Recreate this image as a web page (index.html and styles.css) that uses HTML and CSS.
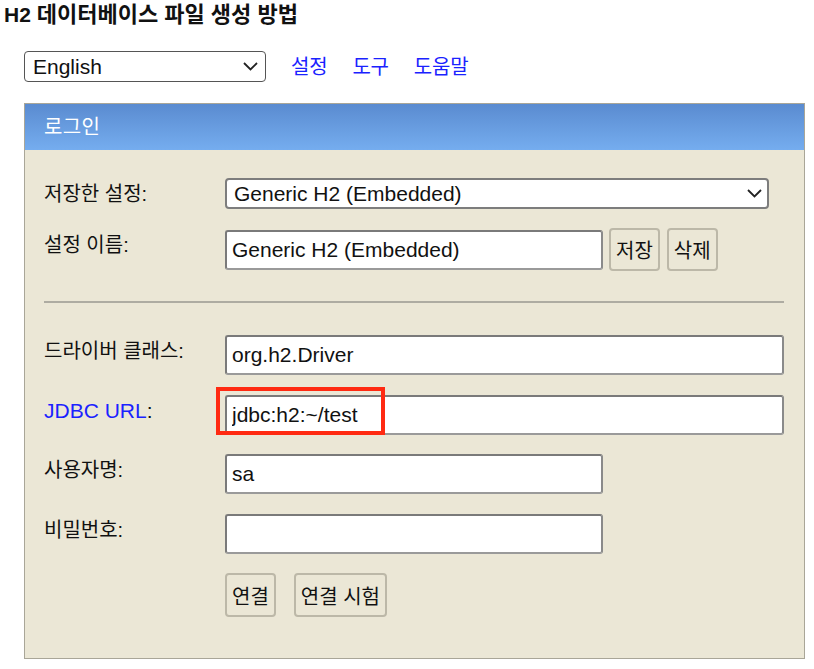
FILE: index.html
```html
<!DOCTYPE html>
<html lang="ko">
<head>
<meta charset="utf-8">
<title>H2 데이터베이스 파일 생성 방법</title>
<link rel="stylesheet" href="styles.css">
</head>
<body>
<h1 class="title">H2 <span class="ko">데이터베이스 파일 생성 방법</span></h1>
<div class="toolbar">
  <span class="select-wrap lang">
    <select class="select select-lang"><option>English</option></select>
    <svg class="chev" width="15" height="9" viewBox="0 0 15 9"><polyline points="1,1 7.5,7.5 14,1" fill="none" stroke="#222" stroke-width="1.8"/></svg>
  </span>
  <a class="link ko" href="#">설정</a>
  <a class="link ko" href="#">도구</a>
  <a class="link ko" href="#">도움말</a>
</div>
<div class="panel">
  <div class="panel-head ko">로그인</div>
  <div class="panel-body">
    <div class="row r1">
      <label class="label ko">저장한 설정:</label>
      <span class="select-wrap saved">
        <select class="select select-saved"><option>Generic H2 (Embedded)</option></select>
        <svg class="chev" width="15" height="9" viewBox="0 0 15 9"><polyline points="1,1 7.5,7.5 14,1" fill="none" stroke="#222" stroke-width="1.8"/></svg>
      </span>
    </div>
    <div class="row r2">
      <label class="label ko">설정 이름:</label>
      <div class="ctrl-group">
        <input class="input input-short" type="text" value="Generic H2 (Embedded)">
        <button class="btn ko btn-save">저장</button>
        <button class="btn ko">삭제</button>
      </div>
    </div>
    <hr class="sep">
    <div class="row r3">
      <label class="label ko">드라이버 클래스:</label>
      <input class="input input-wide" type="text" value="org.h2.Driver">
    </div>
    <div class="row r4">
      <label class="label"><a class="link-label" href="#">JDBC URL</a>:</label>
      <div class="url-wrap">
        <input class="input input-wide" type="text" value="jdbc:h2:~/test">
        <span class="highlight"></span>
      </div>
    </div>
    <div class="row r5">
      <label class="label ko">사용자명:</label>
      <input class="input input-short" type="text" value="sa">
    </div>
    <div class="row r6">
      <label class="label ko">비밀번호:</label>
      <input class="input input-short" type="password" value="">
    </div>
    <div class="row r7">
      <span class="label"></span>
      <div class="ctrl-group">
        <button class="btn ko">연결</button>
        <button class="btn ko btn-test">연결 시험</button>
      </div>
    </div>
  </div>
</div>
</body>
</html>
```
FILE: styles.css
```css
* { box-sizing: border-box; }

body {
  margin: 0;
  background: #ffffff;
  color: #111;
  font-family: "Liberation Sans", "Noto Sans CJK KR", sans-serif;
  font-size: 21px;
}

.ko {
  font-family: "Liberation Sans", "Noto Sans CJK KR", sans-serif;
  letter-spacing: 0;
}

.title {
  margin: 0;
  padding: 1px 0 0 4px;
  height: 30px;
  line-height: 28px;
  font-size: 21px;
  font-weight: bold;
  color: #111;
}
.title .ko { font-size: 22px; letter-spacing: 0; }

.toolbar {
  display: flex;
  align-items: center;
  margin-top: 21px;
  padding-left: 24px;
  height: 31px;
}

.select-wrap {
  position: relative;
  display: inline-block;
}
.select {
  appearance: none;
  -webkit-appearance: none;
  background: #fff;
  color: #111;
  font-family: "Liberation Sans", sans-serif;
  font-size: 21px;
  display: block;
  margin: 0;
}
.select-lang {
  width: 242px;
  height: 31px;
  border: 1px solid #555;
  border-radius: 4px;
  padding: 0 0 0 8px;
}
.select-saved {
  width: 544px;
  height: 31px;
  border: 2px solid #7d7d7d;
  border-radius: 4px;
  padding: 0 0 0 7px;
}
.chev {
  position: absolute;
  top: 11px;
  pointer-events: none;
}
.lang .chev { right: 8px; }
.saved .chev { right: 7px; }

.link {
  color: #1a22ff;
  text-decoration: none;
  font-size: 20px;
  line-height: 24px;
  letter-spacing: -0.2px;
}
.select-wrap.lang { margin-right: 25px; }
.link + .link { margin-left: 25px; }

.panel {
  margin: 21px 0 0 24px;
  width: 781px;
  background: #ebe7d6;
  border: 1px solid #a9a698;
}
.panel-head {
  height: 46px;
  line-height: 46px;
  padding-left: 19px;
  color: #fff;
  font-size: 20px;
  background: linear-gradient(#5a8bd0, #75adef);
  letter-spacing: 0.3px;
}
.panel-body {
  padding: 28px 20px 41px 19px;
  display: flex;
  flex-direction: column;
}

.row {
  display: flex;
  align-items: flex-start;
}
.label {
  width: 181px;
  flex: none;
  padding-top: 4px;
  line-height: 24px;
  font-size: 20px;
  color: #111;
}
.label:not(.ko) { font-size: 21px; }
.link-label {
  color: #1a22ff;
  text-decoration: none;
}

.r2 { margin-top: 19px; }
.r2 .label { padding-top: 5px; }
.r3 { margin-top: 0; }
.r4 { margin-top: 20px; }
.r5 { margin-top: 19px; }
.r6 { margin-top: 20px; }
.r7 { margin-top: 19px; }

.ctrl-group {
  display: flex;
  align-items: center;
}

.input {
  height: 40px;
  border: 2px solid #7a7a7a;
  border-bottom-color: #9a9a9a;
  border-right-color: #8a8a8a;
  border-radius: 3px;
  background: #fff;
  font-family: "Liberation Sans", sans-serif;
  font-size: 21px;
  color: #111;
  padding: 0 5px;
  margin: 0;
}
.input-short { width: 378px; }
.input-wide { width: 559px; display: block; }
.r2 .input { margin-top: 1px; }

.btn {
  height: 44px;
  padding: 0 5px;
  border: 2px solid #bcb8a8;
  border-radius: 4px;
  background: #ebe7d6;
  font-size: 20px;
  color: #111;
  margin: 0;
}
.btn-save { margin-left: 6px; margin-right: 7px; }
.btn-test { margin-left: 18px; }
.r2 .btn { height: 43px; }

.sep {
  border: 0;
  border-top: 2px solid #aeaca2;
  margin: 30px 0 32px 0;
  height: 0;
}

.url-wrap {
  position: relative;
}
.highlight {
  position: absolute;
  left: -9px;
  top: -8px;
  width: 169px;
  height: 48px;
  border: 4px solid #ff2a12;
  pointer-events: none;
}
```
